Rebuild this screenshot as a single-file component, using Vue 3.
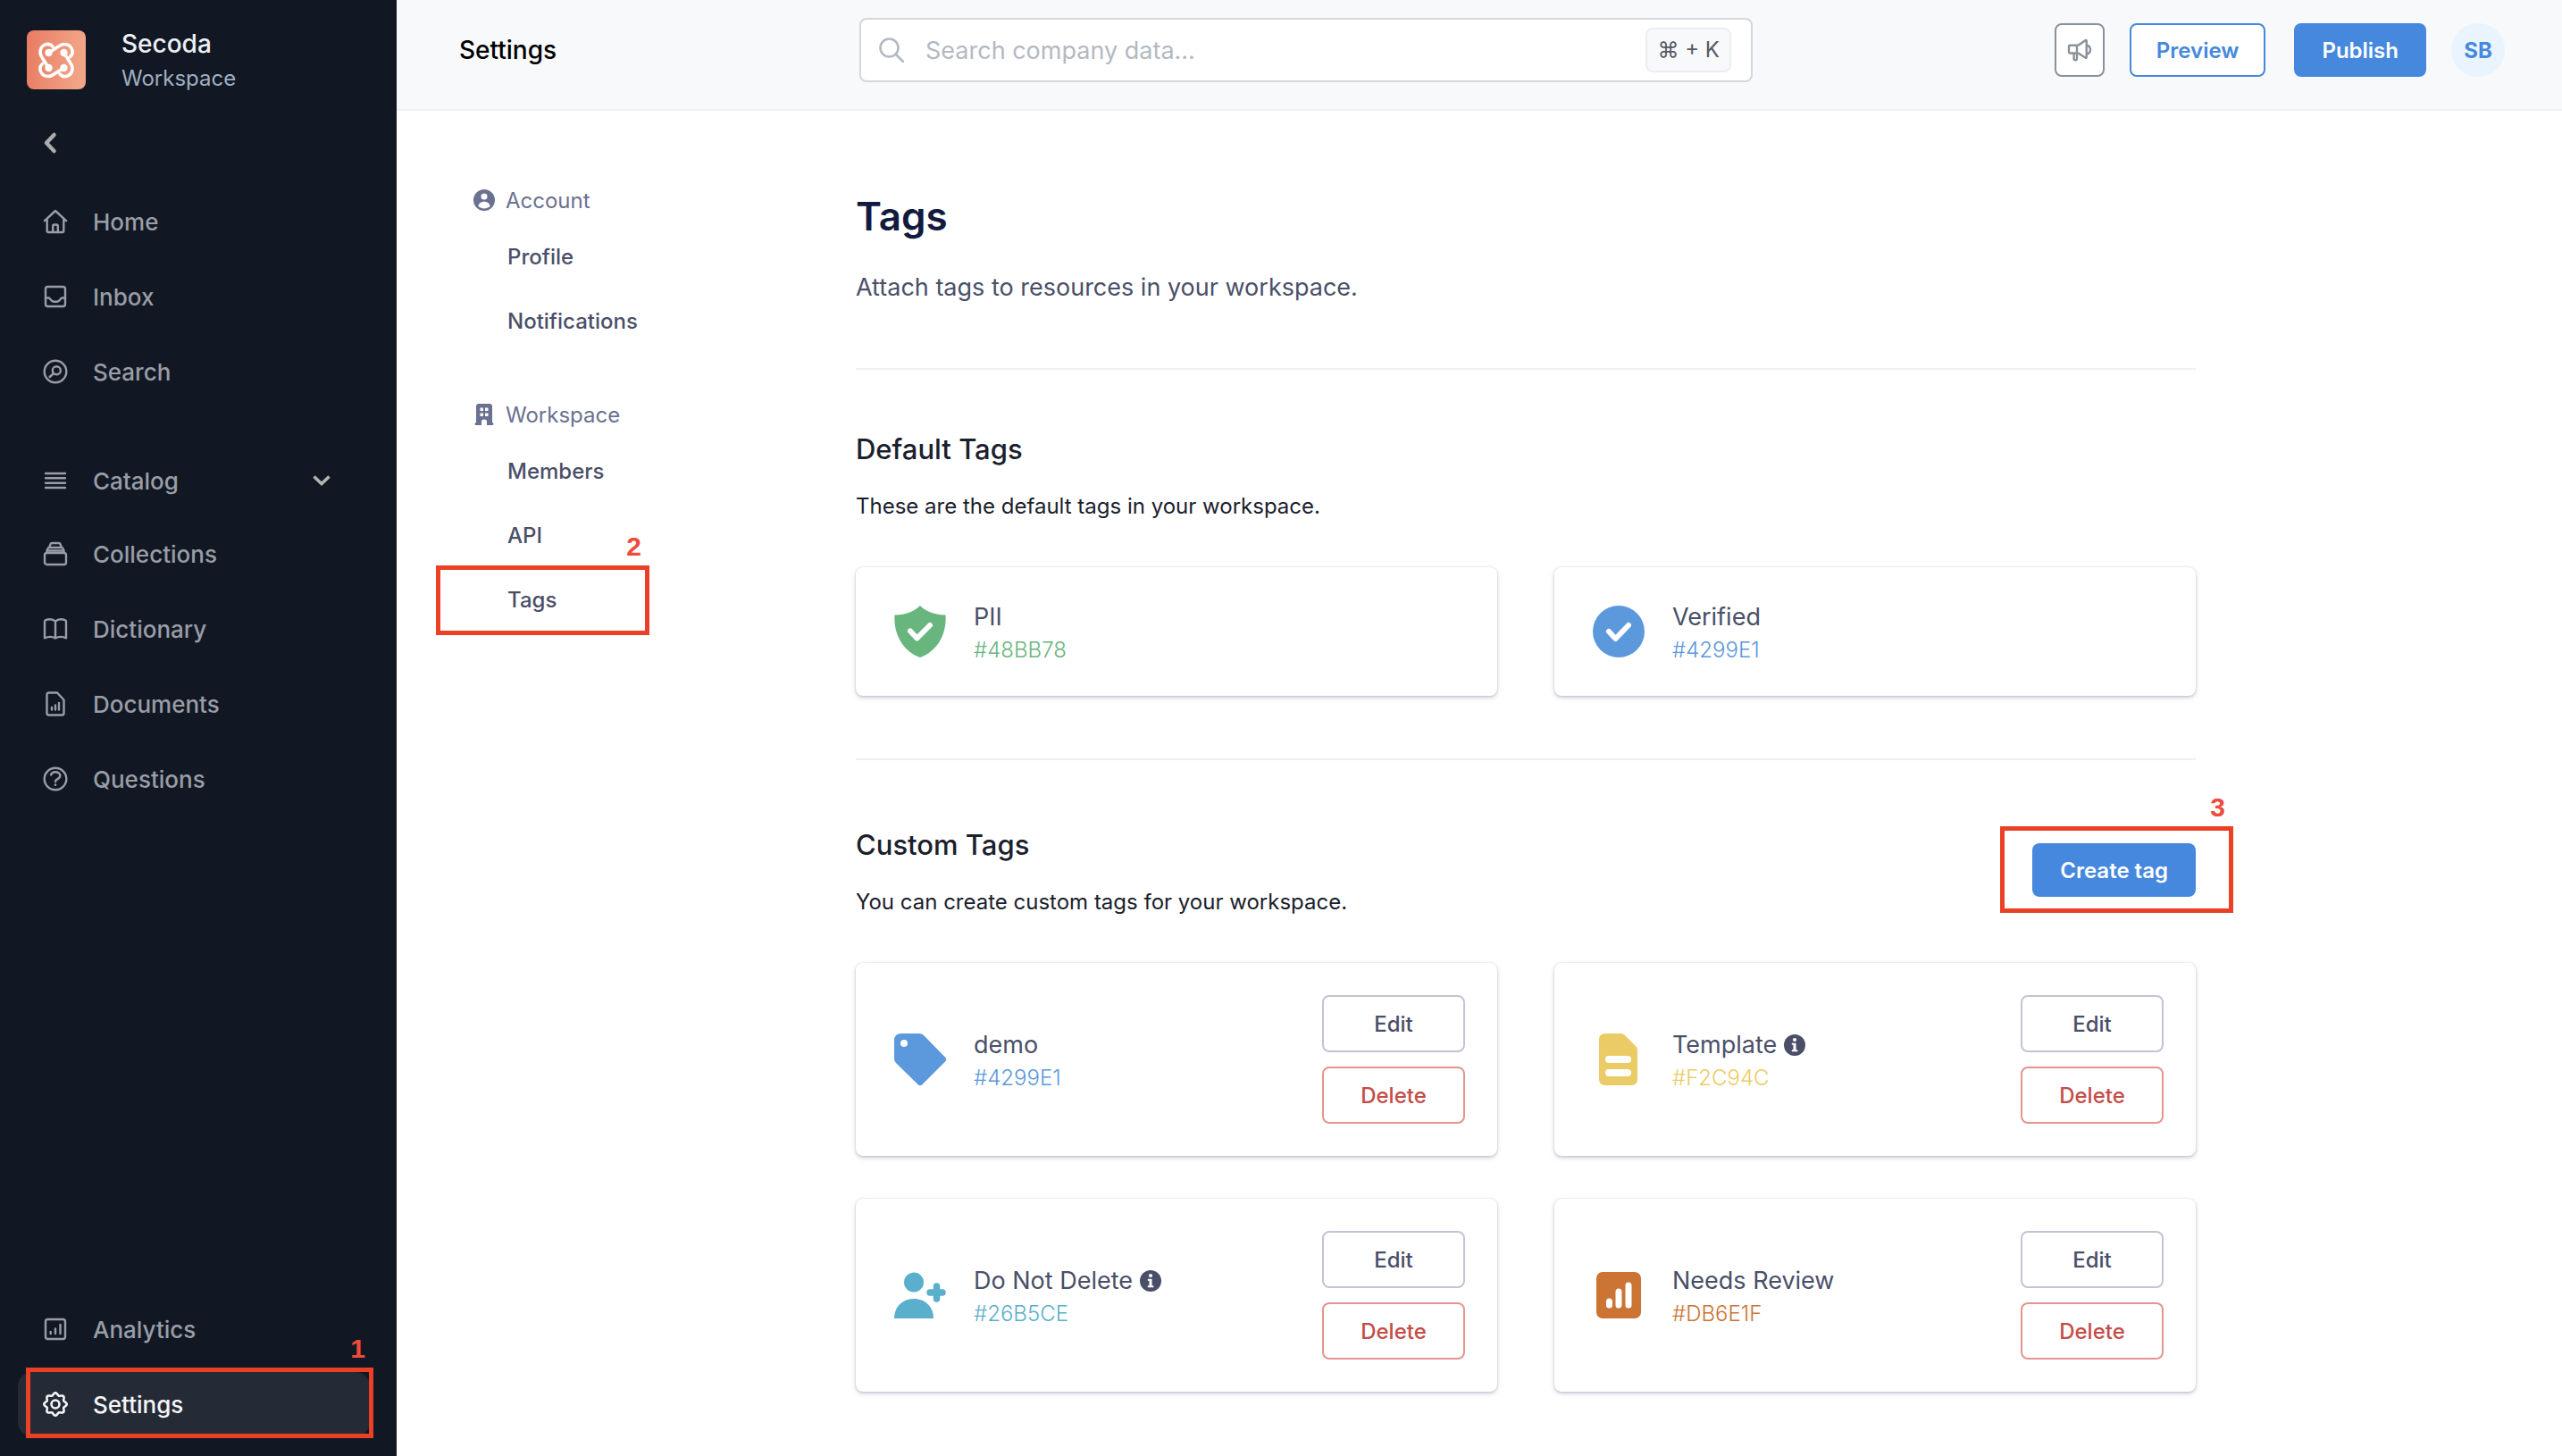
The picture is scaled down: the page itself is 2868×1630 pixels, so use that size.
<script setup>
// Eight-lobed outline for the settings gear, centred on a 28px box
const gearPoints = []
for (let i = 0; i < 96; i++) {
  const t = (i / 96) * Math.PI * 2
  const r = 11.4 + 1.3 * Math.cos(8 * t)
  gearPoints.push(`${(14 + r * Math.cos(t)).toFixed(2)},${(14 + r * Math.sin(t)).toFixed(2)}`)
}

const icons = {
  home: '<path d="M2 13.2 14 2l12 11.2M4.7 11.5v13q0 1.5 1.5 1.5h15.6q1.5 0 1.5-1.5v-13M11.2 26v-6.800q0-1.700 1.700-1.700h2.200q1.700 0 1.700 1.700V26"/>',
  inbox: '<rect x="3" y="3" width="22" height="22" rx="2.500"/><path d="M3 15.500h3.500c1.500 0 3 4.300 5.500 4.300h4c2.500 0 4-4.300 5.500-4.300H25"/>',
  search: '<circle cx="14" cy="14" r="12.300"/><circle cx="15.300" cy="12.700" r="4.500"/><path d="m12 16-4.300 4"/>',
  catalog: '<path d="M3 6h22M3 11.300h22M3 16.700h22M3 22h22"/>',
  collections: '<rect x="2" y="13" width="24" height="13" rx="2.500"/><path d="M4.500 12.500v-2.500l1.800-3h15.400l1.800 3v2.500M5 10.500h18M7.500 6.500l.8-3q.4-1.500 2-1.500h7.400q1.600 0 2 1.500l.8 3"/>',
  dictionary: '<path d="M14 5.500C11 3 6.500 3 3.200 4.200Q2 4.600 2 6v18.300c4-1.800 9-1.500 12 .2 3-1.700 8-2 12-.2V6q0-1.400-1.200-1.800C21.500 3 17 3 14 5.500v19"/>',
  documents: '<path d="M6.500 1.500H16l7.500 8v14.700q0 2.300-2.300 2.300H6.800q-2.300 0-2.300-2.300V3.800q0-2.300 2.300-2.300zM10 18v2.500M14 15.500v5M18 13v7.500"/>',
  questions: '<circle cx="14" cy="14" r="12.300"/><path d="M9 9.500c1-2.500 3-3.200 5-3.200 3 0 5.300 1.700 5.300 4.300 0 3.700-5.300 3.300-5.300 6.400"/><path d="M14 20.600v.2" stroke-width="2.600"/>',
  analytics: '<rect x="3" y="3" width="22" height="22" rx="2.500"/><path d="M8.700 17v2M14 13.500V19M19.500 9v10"/>',
  settings: `<g stroke-width="2.600"><polygon points="${gearPoints.join(' ')}"/><circle cx="14" cy="14" r="4.500"/></g>`,
}

const navGroups = [
  [
    { label: 'Home', icon: 'home' },
    { label: 'Inbox', icon: 'inbox' },
    { label: 'Search', icon: 'search' },
  ],
  [
    { label: 'Catalog', icon: 'catalog', expandable: true },
    { label: 'Collections', icon: 'collections' },
    { label: 'Dictionary', icon: 'dictionary' },
    { label: 'Documents', icon: 'documents' },
    { label: 'Questions', icon: 'questions' },
  ],
  [
    { label: 'Analytics', icon: 'analytics' },
    { label: 'Settings', icon: 'settings', active: true },
  ],
]

const tagIcons = {
  shield: '<path d="M32 3c6 6 14 10 28.500 10.500C62 34 52 54 32 61 12 54 2 34 3.500 13.500 18 13 26 9 32 3z"/><path d="m21 31.500 7.500 8L43 25" fill="none" stroke="#fff" stroke-width="6" stroke-linecap="round" stroke-linejoin="round"/>',
  verified: '<circle cx="32" cy="32" r="29"/><path d="m21 32 7.500 8L43 25" fill="none" stroke="#fff" stroke-width="6" stroke-linecap="round" stroke-linejoin="round"/>',
  tag: '<path fill-rule="evenodd" d="M3 11q0-8 8-8h20q3 0 5 2l24 24.500q2.500 2.500 0 5L34.500 60q-2.500 2.500-5 0L5 36q-2-2-2-5zM14 10a4 4 0 1 0 0 8 4 4 0 0 0 0-8z"/>',
  document: '<path fill-rule="evenodd" d="M17 3h18q2 0 3.500 1.500L51.500 17.500Q53 19 53 21.500V54q0 7-7 7H17q-7 0-7-7V10q0-7 7-7zM21 28a4 4 0 0 0 0 8h21a4 4 0 0 0 0-8zM21 43a4 4 0 0 0 0 8h21a4 4 0 0 0 0-8z"/>',
  userPlus: '<circle cx="25" cy="17.500" r="11"/><path d="M3 58c0-13 9-22 22-22s22 9 22 22z"/><path d="M50.500 22v14M43 29h14" fill="none" stroke="currentColor" stroke-width="7.500" stroke-linecap="round"/>',
  chart: '<rect x="7" y="6" width="50" height="52" rx="7"/><path d="M21.500 39v4M32 28v15M43 21v22" fill="none" stroke="#fff" stroke-width="7" stroke-linecap="round"/>',
}

const defaultTags = [
  { name: 'PII', hex: '#48BB78', color: '#68b67e', icon: 'shield' },
  { name: 'Verified', hex: '#4299E1', color: '#5b98dc', icon: 'verified' },
]

const customTags = [
  { name: 'demo', hex: '#4299E1', color: '#5b98dc', icon: 'tag' },
  { name: 'Template', hex: '#F2C94C', color: '#ebcb65', icon: 'document', info: true },
  { name: 'Do Not Delete', hex: '#26B5CE', color: '#5ab0cc', icon: 'userPlus', info: true },
  { name: 'Needs Review', hex: '#DB6E1F', color: '#cc7434', icon: 'chart' },
]
</script>

<template>
  <div class="app">
    <aside class="sidebar">
      <div class="brand">
        <svg class="logo" viewBox="0 0 66 66" aria-hidden="true">
          <defs>
            <linearGradient id="brand-fill" x1="0" x2="1" y1="0" y2="0.1">
              <stop offset="0" stop-color="#e87c62" />
              <stop offset="1" stop-color="#f2a688" />
            </linearGradient>
          </defs>
          <rect width="66" height="66" rx="8" fill="url(#brand-fill)" />
          <g v-for="angle in [0, 90, 180, 270]" :key="angle" :transform="`rotate(${angle} 33 33.5)`">
            <path d="M29 18C24 12.500 15 16.500 15 24.500c0 2.500 1 4.500 2.500 6.500l7 11" fill="none" stroke="#fff" stroke-width="3.600" stroke-linecap="round" />
            <circle cx="24.500" cy="42" r="4.200" fill="#fff" />
          </g>
        </svg>
        <div class="brand-text">
          <strong>Secoda</strong>
          <span>Workspace</span>
        </div>
      </div>

      <button class="collapse" type="button" aria-label="Collapse sidebar">
        <svg viewBox="0 0 28 28"><path d="M12.500 5 4 14l8.500 9" fill="none" stroke="#acacac" stroke-width="4.500" stroke-linecap="round" stroke-linejoin="round" /></svg>
      </button>

      <nav class="nav" aria-label="Main">
        <ul v-for="(group, index) in navGroups" :key="index" class="nav-group">
          <li v-for="item in group" :key="item.label">
            <a href="#" class="nav-item" :class="{ active: item.active, expandable: item.expandable }">
              <svg class="nav-icon" viewBox="0 0 28 28" aria-hidden="true" v-html="icons[item.icon]"></svg>
              <span>{{ item.label }}</span>
              <svg v-if="item.expandable" class="nav-caret" viewBox="0 0 20 14" aria-hidden="true">
                <path d="m1.500 2.500 8.500 8 8.500-8" fill="none" stroke="#b4b4b0" stroke-width="3.500" />
              </svg>
              <span v-if="item.active" class="callout callout-nav"><b>1</b></span>
            </a>
          </li>
        </ul>
      </nav>
    </aside>

    <div class="page">
      <header class="topbar">
        <div class="topbar-title">Settings</div>
        <div class="search">
          <svg class="search-icon" viewBox="0 0 28 28" aria-hidden="true">
            <circle cx="11.500" cy="11.500" r="10" /><path d="m19 19 8 8" />
          </svg>
          <input type="search" placeholder="Search company data..." aria-label="Search company data" />
          <kbd>⌘ + K</kbd>
        </div>
        <div class="actions">
          <button class="announce" type="button" aria-label="Announcements">
            <svg viewBox="0 0 28 28" aria-hidden="true">
              <path d="M12.500 8.700H3.200Q2 8.700 2 9.900v6.400q0 1.200 1.200 1.200h9.300M11 9v8M12.500 8.700 20.700 3q1-.4 1 .6v18.600q0 1-1 .6l-8.200-5.300M22 8.500c2.400.8 4 2.800 4 5.200s-1.600 4.200-4 5M7.600 18v5.700q0 1.500 1.500 1.500h.4q1.500 0 1.500-1.500V18" />
            </svg>
          </button>
          <button class="btn btn-outline" type="button">Preview</button>
          <button class="btn btn-primary publish" type="button">Publish</button>
          <button class="avatar" type="button" aria-label="Account menu">SB</button>
        </div>
      </header>

      <div class="body">
        <nav class="subnav" aria-label="Settings">
          <section class="subnav-group">
            <div class="subnav-title">
              <svg viewBox="0 0 24 24" aria-hidden="true">
                <path fill-rule="evenodd" d="M12 0a12 12 0 1 0 0 24 12 12 0 0 0 0-24zm0 4.500a3.500 3.500 0 1 1 0 7 3.500 3.500 0 0 1 0-7zM5.500 19c0-3 3-5.200 6.500-5.200s6.500 2.200 6.500 5.200C16.700 20.600 14.500 21.500 12 21.500S7.300 20.600 5.500 19z" />
              </svg>
              <span>Account</span>
            </div>
            <a href="#">Profile</a>
            <a href="#">Notifications</a>
          </section>
          <section class="subnav-group">
            <div class="subnav-title">
              <svg viewBox="0 0 24 24" aria-hidden="true">
                <path fill-rule="evenodd" d="M6 0h12q3 0 3 3v18q1.500 0 1.500 1.500T21 24h-6v-4q0-2.500-3-2.500T9 20v4H3q-1.500 0-1.500-1.500T3 21V3q0-3 3-3zm1.500 4.500V8H11V4.500zm5.500 0V8h3.500V4.500zM7.500 10.500V14H11v-3.500zm5.500 0V14h3.500v-3.500z" />
              </svg>
              <span>Workspace</span>
            </div>
            <a href="#">Members</a>
            <a href="#">API</a>
            <a href="#">Tags<span class="callout callout-subnav"><b>2</b></span></a>
          </section>
        </nav>

        <main class="content">
          <h1>Tags</h1>
          <p class="lead">Attach tags to resources in your workspace.</p>

          <hr />

          <section>
            <h2>Default Tags</h2>
            <p class="hint">These are the default tags in your workspace.</p>
            <div class="cards">
              <article v-for="tag in defaultTags" :key="tag.name" class="card">
                <svg class="tag-icon" viewBox="0 0 64 64" aria-hidden="true" fill="currentColor" :style="{ color: tag.color }" v-html="tagIcons[tag.icon]"></svg>
                <div class="tag-text">
                  <div class="tag-name">{{ tag.name }}</div>
                  <div class="tag-hex" :style="{ color: tag.color }">{{ tag.hex }}</div>
                </div>
              </article>
            </div>
          </section>

          <hr />

          <section class="custom">
            <div class="section-head">
              <div>
                <h2>Custom Tags</h2>
                <p class="hint">You can create custom tags for your workspace.</p>
              </div>
              <div class="create">
                <button class="btn btn-primary" type="button">Create tag</button>
                <span class="callout callout-create"><b>3</b></span>
              </div>
            </div>
            <div class="cards">
              <article v-for="tag in customTags" :key="tag.name" class="card card-editable">
                <svg class="tag-icon" viewBox="0 0 64 64" aria-hidden="true" fill="currentColor" :style="{ color: tag.color }" v-html="tagIcons[tag.icon]"></svg>
                <div class="tag-text">
                  <div class="tag-name">
                    {{ tag.name }}
                    <svg v-if="tag.info" class="info" viewBox="0 0 24 24" aria-hidden="true">
                      <circle cx="12" cy="12" r="12" fill="#4a4f68" />
                      <circle cx="12" cy="6" r="2.100" fill="#fff" />
                      <path d="M8.800 9.800h4.700v7.400h1.800v2H8.800v-2h1.700v-5.400H8.800z" fill="#fff" />
                    </svg>
                  </div>
                  <div class="tag-hex" :style="{ color: tag.color }">{{ tag.hex }}</div>
                </div>
                <div class="card-actions">
                  <button class="card-btn" type="button">Edit</button>
                  <button class="card-btn danger" type="button">Delete</button>
                </div>
              </article>
            </div>
          </section>
        </main>
      </div>
    </div>
  </div>
</template>

<style>
body {
  background: #fff;
}
</style>

<style scoped>
.app,
.app * {
  box-sizing: border-box;
}

.app {
  display: flex;
  min-height: 100vh;
  font-family: Inter, "Liberation Sans", sans-serif;
  font-size: 24px;
  color: #1a202c;
}

button,
input,
kbd {
  font: inherit;
}

button {
  padding: 0;
  border: 0;
  background: none;
  cursor: pointer;
}

a {
  color: inherit;
  text-decoration: none;
}

h1,
h2,
p,
ul {
  margin: 0;
  padding: 0;
}

/* Sidebar */
.sidebar {
  display: flex;
  flex: none;
  flex-direction: column;
  width: 444px;
  padding: 30px 30px 22px 20px;
  background: #111824;
}

.brand {
  display: flex;
  align-items: flex-start;
  gap: 40px;
  padding-left: 10px;
}

.logo {
  width: 66px;
  height: 66px;
  margin-top: 4px;
}

.brand-text {
  display: flex;
  flex-direction: column;
  line-height: 40px;
  color: #a0aec0;
}

.brand-text strong {
  font-size: 28px;
  font-weight: 500;
  line-height: 38px;
  color: #edf0f4;
}

.collapse {
  align-self: flex-start;
  width: 28px;
  height: 28px;
  margin: 38px 28px;
}

.collapse svg {
  display: block;
}

.nav {
  display: flex;
  flex: 1;
  flex-direction: column;
  gap: 52px;
}

.nav-group {
  display: flex;
  flex-direction: column;
  gap: 12px;
  list-style: none;
}

.nav-group:last-child {
  margin-top: auto;
}

.nav-item {
  position: relative;
  display: flex;
  align-items: center;
  gap: 28px;
  height: 72px;
  padding: 0 44px 0 28px;
  border-radius: 16px;
  font-size: 26px;
  font-weight: 500;
  color: #9a9da6;
}

.nav-item.expandable {
  height: 68px;
}

.nav-item.active {
  background: #252b36;
  color: #f4f5f7;
}

.nav-icon {
  flex: none;
  width: 28px;
  height: 28px;
  fill: none;
  stroke: currentColor;
  stroke-width: 2.4;
  stroke-linecap: round;
  stroke-linejoin: round;
}

.nav-caret {
  width: 20px;
  height: 14px;
  margin-left: auto;
}

/* Numbered step markers */
.callout {
  position: absolute;
  border: 5px solid #ea4025;
  pointer-events: none;
}

.callout b {
  position: absolute;
  right: 4px;
  bottom: calc(100% + 9px);
  font-family: "Liberation Sans", sans-serif;
  font-size: 30px;
  line-height: 34px;
  color: #ee4b3b;
}

.callout-nav {
  inset: -5px -4px -2px 9px;
}

.callout-subnav {
  inset: -3px 0;
}

.callout-create {
  inset: -19px -42px -18px -36px;
}

/* Top bar */
.page {
  flex: 1;
  min-width: 0;
}

.topbar {
  display: flex;
  height: 124px;
  padding: 20px 64px 0 70px;
  border-bottom: 2px solid #edf0f4;
  background: #f8f9fb;
}

.topbar-title {
  flex: none;
  width: 448px;
  font-size: 28px;
  font-weight: 500;
  line-height: 72px;
  color: #000;
}

.search {
  display: flex;
  flex: 0 1 1000px;
  align-items: center;
  gap: 24px;
  height: 72px;
  padding: 0 22px 0 20px;
  border: 2px solid #d2d8dd;
  border-radius: 8px;
  background: #fff;
}

.search-icon {
  flex: none;
  width: 28px;
  height: 28px;
  fill: none;
  stroke: #b3b9c1;
  stroke-width: 2.6;
  stroke-linecap: round;
}

.search input {
  flex: 1;
  min-width: 0;
  height: 60px;
  padding: 0;
  border: 0;
  outline: 0;
  background: transparent;
  font-size: 27px;
}

.search input::placeholder {
  color: #b3b9c1;
  opacity: 1;
}

.search kbd {
  padding: 0 11px;
  border: 2px solid #ebedf0;
  border-radius: 8px;
  background: #f8f9fb;
  line-height: 46px;
  white-space: nowrap;
  color: #555a61;
}

.actions {
  display: flex;
  gap: 28px;
  margin-left: auto;
  padding-top: 6px;
}

.announce {
  width: 56px;
  height: 60px;
  border: 2px solid #8a919b;
  border-radius: 8px;
  background: #fff;
}

.announce svg {
  display: block;
  width: 28px;
  height: 28px;
  margin: 0 auto;
  fill: none;
  stroke: #8a919b;
  stroke-width: 2.4;
  stroke-linejoin: round;
}

.btn {
  height: 60px;
  padding: 0 31px;
  border-radius: 8px;
  font-weight: 600;
}

.btn-outline {
  padding: 0 28px;
  border: 2px solid #4588dd;
  background: #fff;
  color: #4588dd;
}

.btn-primary {
  background: #4588dd;
  color: #fff;
}

.publish {
  margin-left: 4px;
}

.avatar {
  width: 60px;
  height: 60px;
  border-radius: 50%;
  background: #e9f4fe;
  font-weight: 700;
  color: #4588dd;
}

/* Settings body */
.body {
  display: flex;
  padding: 0 64px 72px 44px;
}

.subnav {
  display: flex;
  flex: none;
  flex-direction: column;
  gap: 48px;
  width: 470px;
  padding-top: 80px;
}

.subnav-group {
  width: 239px;
}

.subnav-title {
  display: flex;
  align-items: center;
  gap: 12px;
  height: 40px;
  margin-bottom: 8px;
  padding-left: 42px;
  color: #6b7190;
}

.subnav-title svg {
  width: 24px;
  height: 24px;
  fill: #6b7190;
}

.subnav-group a {
  position: relative;
  display: block;
  padding-left: 80px;
  font-weight: 500;
  line-height: 72px;
  color: #4a4f68;
}

.content {
  flex: 1;
  min-width: 0;
  max-width: 1500px;
  padding-top: 90px;
}

h1 {
  font-size: 44px;
  font-weight: 600;
  line-height: 56px;
  color: #131a3f;
}

.lead {
  margin-top: 32px;
  font-size: 27px;
  line-height: 40px;
  color: #4a4f68;
}

hr {
  height: 2px;
  margin: 70px 0;
  border: 0;
  background: #edf1f5;
}

h2 {
  font-size: 31px;
  font-weight: 500;
  line-height: 38px;
}

.hint {
  margin-top: 26px;
  line-height: 38px;
}

.custom {
  margin-top: 76px;
}

.section-head {
  display: flex;
  align-items: flex-start;
  justify-content: space-between;
}

.create {
  position: relative;
  margin-top: 17px;
}

.create .btn {
  display: block;
}

.cards {
  display: grid;
  grid-template-columns: 1fr 1fr;
  gap: 48px 64px;
  margin-top: 49px;
}

.card {
  display: flex;
  align-items: center;
  gap: 28px;
  min-height: 144px;
  padding: 32px 36px 32px 40px;
  border-radius: 8px;
  background: #fff;
  box-shadow: 0 0 2px rgba(0, 0, 0, 0.14), 0 2px 6px rgba(40, 60, 90, 0.14), 0 2px 3px rgba(40, 60, 90, 0.14);
}

.tag-icon {
  flex: none;
  width: 64px;
  height: 64px;
}

.tag-text {
  padding-top: 4px;
}

.tag-name {
  display: flex;
  align-items: center;
  gap: 8px;
  font-size: 27px;
  line-height: 38px;
  color: #4a4f68;
}

.info {
  width: 24px;
  height: 24px;
}

.tag-hex {
  font-weight: 300;
  line-height: 36px;
}

.card-actions {
  display: flex;
  flex-direction: column;
  gap: 16px;
  margin-left: auto;
}

.card-editable {
  min-height: 216px;
}

.card-btn {
  width: 160px;
  height: 64px;
  border: 2px solid #c3c3d5;
  border-radius: 8px;
  background: #fff;
  font-weight: 500;
  color: #4a4f68;
}

.card-btn.danger {
  border-color: #e29590;
  color: #c44d47;
}
</style>
